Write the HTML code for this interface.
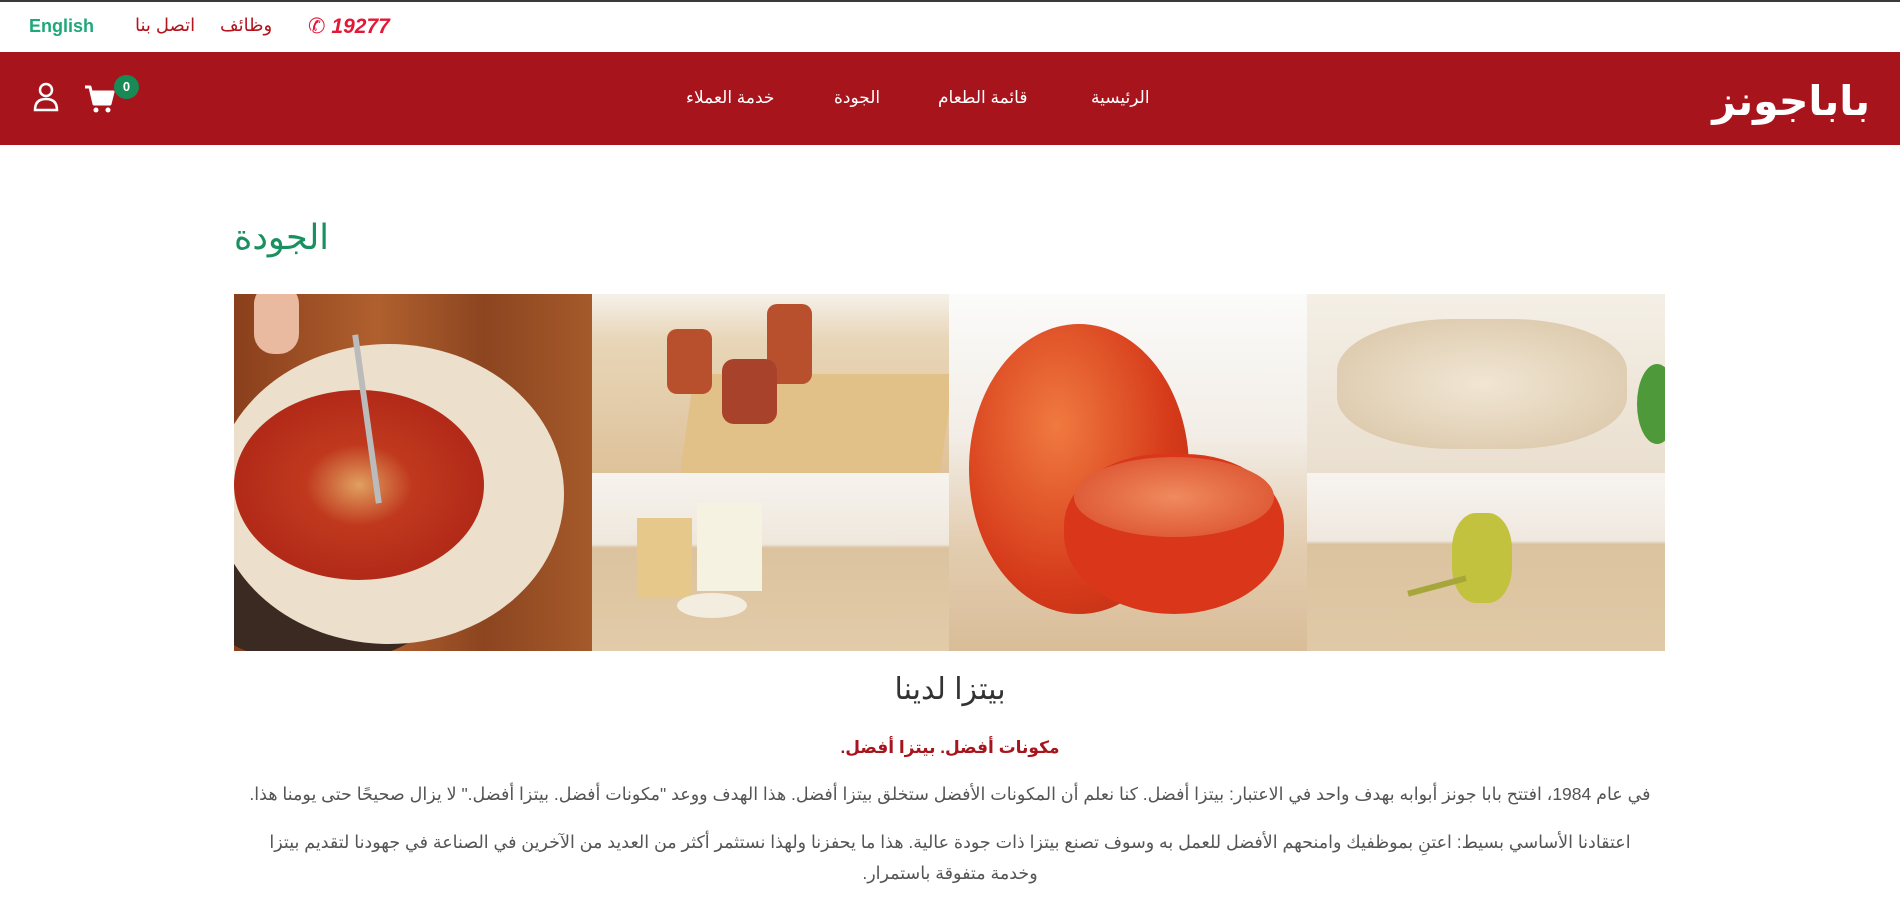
<!DOCTYPE html>
<html dir="rtl"><head><meta charset="utf-8"><style>
*{margin:0;padding:0;box-sizing:border-box}
body{width:1900px;height:922px;overflow:hidden;background:#fff;font-family:"Liberation Sans","Noto Sans CJK SC","DejaVu Sans",sans-serif;position:relative}
.a{position:absolute;white-space:nowrap}
.img{position:absolute;overflow:hidden}
</style></head><body>
<div class="a" style="left:0;top:0;width:1900px;height:2px;background:#3a3a3a"></div>
<div class="a" style="left:29px;top:16px;font-size:18px;font-weight:bold;color:#1fa87a" dir="ltr">English</div>
<div class="a" style="left:135px;top:15px;font-size:18px;color:#b3141d">اتصل بنا</div>
<div class="a" style="left:220px;top:15px;font-size:18px;color:#b3141d">وظائف</div>
<div class="a" style="left:308px;top:14px;font-size:21px;font-weight:900;font-style:italic;color:#e31837" dir="ltr">&#x2706; 19277</div>

<div class="a" style="left:0;top:52px;width:1900px;height:93px;background:#a8141c"></div>
<svg class="a" style="left:32px;top:82px" width="28" height="30" viewBox="0 0 28 30"><circle cx="14" cy="8" r="6" fill="none" stroke="#fff" stroke-width="2.5"/><path d="M3 28 Q3 17 14 17 Q25 17 25 28 Z" fill="none" stroke="#fff" stroke-width="2.5"/></svg>
<svg class="a" style="left:83px;top:84px" width="34" height="30" viewBox="0 0 34 30"><path d="M2 3 H7 L11 20 H27 L30 8 H9" fill="none" stroke="#fff" stroke-width="3" stroke-linejoin="round"/><path d="M9 9 H29 L27 19 H11 Z" fill="#fff"/><circle cx="13" cy="26" r="2.5" fill="#fff"/><circle cx="25" cy="26" r="2.5" fill="#fff"/></svg>
<div class="a" style="left:114px;top:75px;width:25px;height:24px;border-radius:50%;background:#178a56;color:#fff;font-size:13px;font-weight:bold;text-align:center;line-height:24px">0</div>
<div class="a" style="left:686px;top:88px;font-size:17px;color:#fff">خدمة العملاء</div>
<div class="a" style="left:834px;top:88px;font-size:17px;color:#fff">الجودة</div>
<div class="a" style="left:938px;top:88px;font-size:17px;color:#fff">قائمة الطعام</div>
<div class="a" style="left:1091px;top:88px;font-size:17px;color:#fff">الرئيسية</div>
<div class="a" style="right:30px;top:77px;font-size:41px;font-weight:900;color:#fff;letter-spacing:-1px">باباجونز</div>

<div class="a" style="left:234px;top:218px;font-size:35px;color:#1a8f5f">الجودة</div>

<div class="img" style="left:234px;top:294px;width:358px;height:357px;background:linear-gradient(90deg,#8a3f1c,#b0602e 40%,#8c4520 70%,#a55a2a)">
 <div class="a" style="left:-40px;top:230px;width:250px;height:140px;border-radius:50%;background:#3a2a22"></div>
 <div class="a" style="left:-20px;top:50px;width:350px;height:300px;border-radius:50%;background:#ece0cc"></div>
 <div class="a" style="left:0;top:96px;width:250px;height:190px;border-radius:50%;background:radial-gradient(ellipse,#e0a060 0,#c0391e 30%,#b22a18 70%)"></div>
 <div class="a" style="left:20px;top:-10px;width:45px;height:70px;border-radius:20px;background:#e9b9a0"></div>
 <div class="a" style="left:130px;top:40px;width:6px;height:170px;background:#bbb;transform:rotate(-8deg)"></div>
</div>
<div class="img" style="left:592px;top:294px;width:357px;height:179px;background:linear-gradient(#f5f1ea 0,#e8d6b8 25%,#dec29a)">
 <div class="a" style="left:95px;top:80px;width:260px;height:100px;background:#e2c188;transform:skewX(-8deg)"></div>
 <div class="a" style="left:75px;top:35px;width:45px;height:65px;background:#b8502e;border-radius:10px"></div>
 <div class="a" style="left:175px;top:10px;width:45px;height:80px;background:#b8502e;border-radius:10px"></div>
 <div class="a" style="left:130px;top:65px;width:55px;height:65px;background:#a8422a;border-radius:12px"></div>
</div>
<div class="img" style="left:592px;top:473px;width:357px;height:178px;background:linear-gradient(#f6f3ee 0,#efe7dc 40%,#dcc3a0 42%,#e2cba8)">
 <div class="a" style="left:45px;top:45px;width:55px;height:80px;background:#e6c88a"></div>
 <div class="a" style="left:105px;top:30px;width:65px;height:88px;background:#f6f2e2"></div>
 <div class="a" style="left:85px;top:120px;width:70px;height:25px;border-radius:50%;background:#f3ede0"></div>
</div>
<div class="img" style="left:949px;top:294px;width:358px;height:357px;background:linear-gradient(#fbfbfa 0,#f2ede6 40%,#e3cdb0 70%,#d9bd98)">
 <div class="a" style="left:20px;top:30px;width:220px;height:290px;border-radius:50%;background:radial-gradient(ellipse at 40% 35%,#f07a40,#d63b1a 60%,#b42812)"></div>
 <div class="a" style="left:115px;top:160px;width:220px;height:160px;border-radius:45% 45% 50% 50%;background:#d9361a"></div>
 <div class="a" style="left:125px;top:163px;width:200px;height:80px;border-radius:50%;background:radial-gradient(ellipse,#f08a5e,#d84a28)"></div>
</div>
<div class="img" style="left:1307px;top:294px;width:358px;height:179px;background:linear-gradient(#f4efe6,#eadfcf)">
 <div class="a" style="left:30px;top:25px;width:290px;height:130px;border-radius:40%;background:radial-gradient(ellipse,#f1e6d4,#d8c4a4)"></div>
 <div class="a" style="left:330px;top:70px;width:40px;height:80px;border-radius:50%;background:#4e9a3a"></div>
</div>
<div class="img" style="left:1307px;top:473px;width:358px;height:178px;background:linear-gradient(#f7f4f0 0,#efe8df 38%,#dcc3a0 40%,#e0c9a6)">
 <div class="a" style="left:145px;top:40px;width:60px;height:90px;border-radius:40%;background:#c3c23e"></div>
 <div class="a" style="left:100px;top:110px;width:60px;height:6px;background:#a7a63a;transform:rotate(-15deg)"></div>
</div>

<div class="a" style="left:0;width:1900px;text-align:center;top:672px;font-size:30px;color:#333">بيتزا لدينا</div>
<div class="a" style="left:0;width:1900px;text-align:center;top:738px;font-size:17px;font-weight:bold;color:#a8141c">مكونات أفضل. بيتزا أفضل.</div>
<div class="a" style="left:200px;width:1500px;text-align:center;top:784px;font-size:17.5px;color:#555">في عام 1984، افتتح بابا جونز أبوابه بهدف واحد في الاعتبار: بيتزا أفضل. كنا نعلم أن المكونات الأفضل ستخلق بيتزا أفضل. هذا الهدف ووعد "مكونات أفضل. بيتزا أفضل." لا يزال صحيحًا حتى يومنا هذا.</div>
<div class="a" style="left:200px;width:1500px;text-align:center;top:827px;font-size:17.5px;color:#555;line-height:31px">اعتقادنا الأساسي بسيط: اعتنِ بموظفيك وامنحهم الأفضل للعمل به وسوف تصنع بيتزا ذات جودة عالية. هذا ما يحفزنا ولهذا نستثمر أكثر من العديد من الآخرين في الصناعة في جهودنا لتقديم بيتزا<br>وخدمة متفوقة باستمرار.</div>
</body></html>
